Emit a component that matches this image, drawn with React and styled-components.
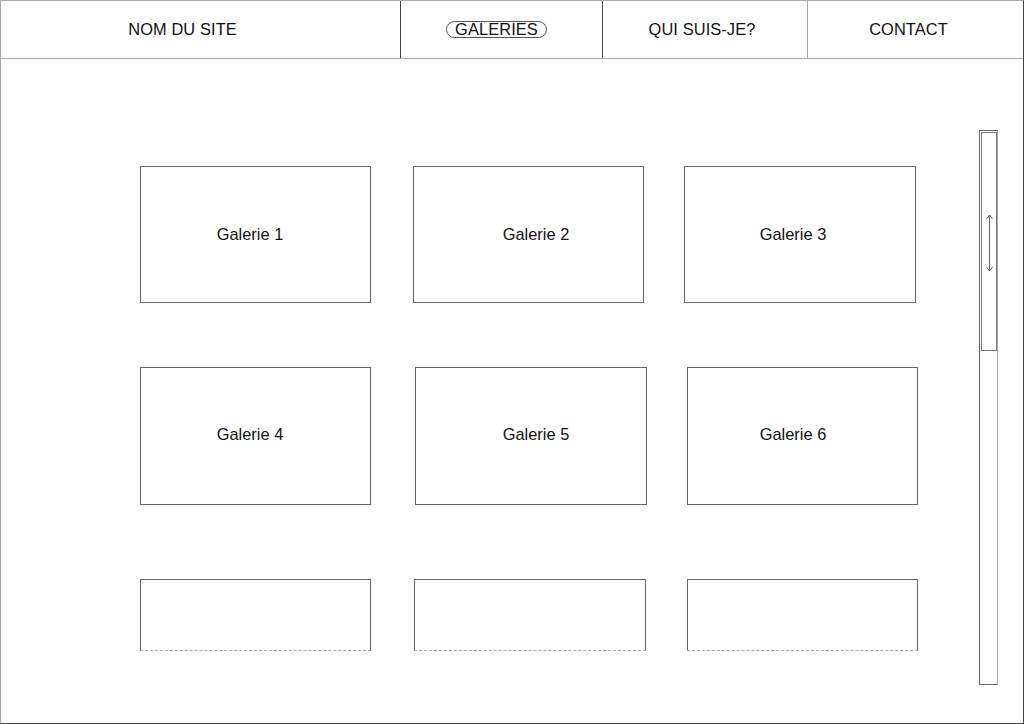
import styled, { createGlobalStyle } from 'styled-components';

const GlobalStyle = createGlobalStyle`
  html, body {
    margin: 0;
    padding: 0;
    background: #ffffff;
  }
  body {
    font-family: "Liberation Sans", Arial, sans-serif;
    color: #111;
  }
`;

const Frame = styled.div`
  width: 1024px;
  height: 724px;
  box-sizing: border-box;
  border-style: solid;
  border-width: 1px;
  border-color: #a8a8a8 #444 #444 #a8a8a8;
  display: flex;
  flex-direction: column;
  background: #fff;
`;

const Header = styled.nav`
  height: 58px;
  box-sizing: border-box;
  border-bottom: 1px solid #a8a8a8;
  display: flex;
`;

const NavItem = styled.div`
  width: ${p => (p.$width ? `${p.$width}px` : 'auto')};
  flex: ${p => (p.$width ? 'none' : '1')};
  box-sizing: border-box;
  border-right: ${p => (p.$divider ? `1px solid ${p.$divider}` : 'none')};
  padding-right: ${p => p.$shift || 0}px;
  display: flex;
  align-items: center;
  justify-content: center;
  font-size: 16.4px;
  letter-spacing: 0.1px;
  text-transform: uppercase;
`;

const Pill = styled.span`
  display: inline-block;
  border: 1px solid #555;
  border-radius: 9px;
  line-height: 15px;
  padding: 0 8px;
`;

const Main = styled.main`
  flex: 1;
  display: flex;
`;

const Gallery = styled.section`
  flex: 1;
  padding: 107px 0 0 139px;
  display: flex;
  flex-direction: column;
`;

const Row = styled.div`
  display: flex;
  margin-top: ${p => p.$top || 0}px;
`;

const Card = styled.div`
  width: ${p => p.$w || 231}px;
  height: ${p => p.$h || 137}px;
  margin-left: ${p => p.$ml || 0}px;
  box-sizing: border-box;
  border: 1px solid #666;
  border-bottom: ${p => (p.$cut ? '1px dashed #aaa' : '1px solid #666')};
  padding-left: ${p => Math.max(0, (p.$dx || 0) * 2)}px;
  padding-right: ${p => Math.max(0, -(p.$dx || 0) * 2)}px;
  padding-bottom: ${p => Math.max(0, -(p.$dy || 0) * 2)}px;
  display: flex;
  align-items: center;
  justify-content: center;
  font-size: 16.4px;
`;

const ScrollTrack = styled.div`
  width: 19px;
  height: 555px;
  margin: 71px 25px 0 0;
  box-sizing: border-box;
  border: 1px solid #666;
  border-right-color: #aaa;
  padding: 1px 0 0 1px;
`;

const Thumb = styled.div`
  height: 219px;
  box-sizing: border-box;
  border: 1px solid #777;
  display: flex;
  justify-content: center;
  padding-top: 81px;
`;

const galleries = [
  {
    top: 0,
    h: 137,
    cards: [
      { ml: 0, dx: -5.5, label: 'Galerie 1' },
      { ml: 42, dx: 7.5, label: 'Galerie 2' },
      { ml: 40, w: 232, dx: -7, label: 'Galerie 3' },
    ],
  },
  {
    top: 64,
    h: 138,
    dy: -1.5,
    cards: [
      { ml: 0, dx: -5.5, label: 'Galerie 4' },
      { ml: 44, w: 232, dx: 5, label: 'Galerie 5' },
      { ml: 40, dx: -9.5, label: 'Galerie 6' },
    ],
  },
  { top: 74, h: 72, cut: true, cards: [{ ml: 0 }, { ml: 43, w: 232 }, { ml: 41 }] },
];

function UpDownArrow() {
  return (
    <svg width="7" height="58" viewBox="0 0 7 58" fill="none" stroke="#666" strokeWidth="1">
      <line x1="3.5" y1="1" x2="3.5" y2="57" />
      <polyline points="0.5,5 3.5,1 6.5,5" />
      <polyline points="0.5,53 3.5,57 6.5,53" />
    </svg>
  );
}

export default function App() {
  return (
    <>
      <GlobalStyle />
      <Frame>
        <Header>
          <NavItem $width={400} $divider="#444" $shift={36}>
            Nom du site
          </NavItem>
          <NavItem $width={202} $divider="#444" $shift={10}>
            <Pill>Galeries</Pill>
          </NavItem>
          <NavItem $width={205} $divider="#aaa" $shift={6}>
            Qui suis-je?
          </NavItem>
          <NavItem $shift={14}>Contact</NavItem>
        </Header>
        <Main>
          <Gallery>
            {galleries.map((row, i) => (
              <Row key={i} $top={row.top}>
                {row.cards.map((card, j) => (
                  <Card
                    key={j}
                    $ml={card.ml}
                    $w={card.w}
                    $h={row.h}
                    $cut={row.cut}
                    $dx={card.dx}
                    $dy={row.dy}
                  >
                    {card.label}
                  </Card>
                ))}
              </Row>
            ))}
          </Gallery>
          <ScrollTrack>
            <Thumb>
              <UpDownArrow />
            </Thumb>
          </ScrollTrack>
        </Main>
      </Frame>
    </>
  );
}
